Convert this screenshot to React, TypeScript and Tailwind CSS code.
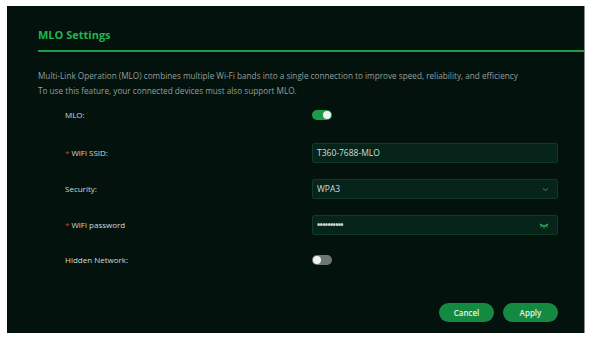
import { ReactNode } from 'react';

const font = { fontFamily: '"Open Sans", "Liberation Sans", sans-serif' };

function Toggle({ on }: { on: boolean }) {
  return (
    <div
      className={`flex h-[10px] w-[20px] items-center rounded-full px-[1px] ${
        on ? 'justify-end bg-[#1d9b48]' : 'justify-start bg-[#6f7774]'
      }`}
    >
      <div className="h-[8px] w-[8px] rounded-full bg-[#eef3ef]" />
    </div>
  );
}

function Row({
  label,
  required,
  mt,
  children,
}: {
  label: string;
  required?: boolean;
  mt: string;
  children: ReactNode;
}) {
  return (
    <div className={`flex h-[20px] items-center ${mt}`}>
      <div className="w-[247px] text-[8px] text-[#d3dad6]">
        {required && <span className="mr-[2px] text-[#d0374a]">*</span>}
        {label}
      </div>
      {children}
    </div>
  );
}

function Field({ children }: { children: ReactNode }) {
  return (
    <div className="flex h-[20px] w-[246px] items-center justify-between rounded-[2px] border border-[#0f3a26] bg-[#06241a] pl-[4px] pr-[8px] text-[8.5px] text-[#d5dcd8]">
      {children}
    </div>
  );
}

export default function App() {
  return (
    <div className="h-[337px] w-[590px] bg-white pl-[7px] pt-[6px]" style={font}>
      <div className="flex h-[327px] w-[578px] flex-col border-r border-[#8a8f8c] bg-[#03120d]">
        <div className="pl-[31px] pt-[23px] text-[11px] font-bold leading-[12px] text-[#22b452]">
          MLO Settings
        </div>
        <div className="ml-[31px] mt-[9px] h-[2px] bg-[#1f9a47]" />
        <div className="mt-[16px] pl-[31px] text-[8.2px] leading-[15px] text-[#959f99]">
          <div>
            Multi-Link Operation (MLO) combines multiple Wi-Fi bands into a single connection to improve speed,
            reliability, and efficiency
          </div>
          <div>To use this feature, your connected devices must also support MLO.</div>
        </div>

        <div className="flex flex-col pl-[58px]">
          <Row label="MLO:" mt="mt-[7px]">
            <Toggle on />
          </Row>
          <Row label="WiFi SSID:" required mt="mt-[18px]">
            <Field>
              <span>T360-7688-MLO</span>
            </Field>
          </Row>
          <Row label="Security:" mt="mt-[16px]">
            <Field>
              <span>WPA3</span>
              <svg width="7" height="5" viewBox="0 0 7 5" fill="none">
                <path d="M1 1.5 L3.5 3.5 L6 1.5" stroke="#6f7d75" strokeWidth="0.9" />
              </svg>
            </Field>
          </Row>
          <Row label="WiFi password" required mt="mt-[16px]">
            <Field>
              <span className="font-bold tracking-[-0.6px]">••••••••••</span>
              <svg width="10" height="7" viewBox="0 0 10 7" fill="none">
                <path d="M1 2 Q5 6 9 2" stroke="#2bb25a" strokeWidth="1.2" />
                <path d="M2.5 4 L1.6 5.5 M5 5 L5 6.5 M7.5 4 L8.4 5.5" stroke="#2bb25a" strokeWidth="1" />
              </svg>
            </Field>
          </Row>
          <Row label="Hidden Network:" mt="mt-[15px]">
            <Toggle on={false} />
          </Row>
        </div>

        <div className="mt-[33px] flex justify-end gap-[9px] pr-[26px]">
          <button className="h-[19px] w-[55px] rounded-full bg-[#138a3f] text-[8px] font-semibold text-[#e8f2ec]">
            Cancel
          </button>
          <button className="h-[19px] w-[55px] rounded-full bg-[#138a3f] text-[8px] font-semibold text-[#e8f2ec]">
            Apply
          </button>
        </div>
      </div>
    </div>
  );
}
